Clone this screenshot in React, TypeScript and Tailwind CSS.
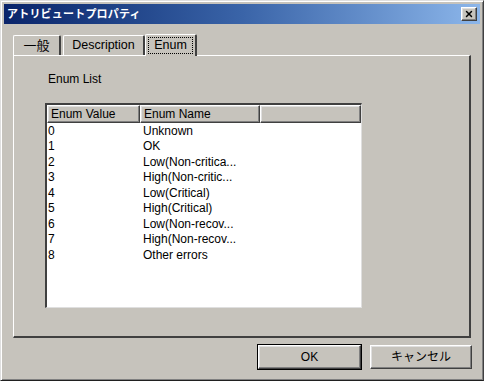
import { X } from "lucide-react"

const rows = [
  ["0", "Unknown"],
  ["1", "OK"],
  ["2", "Low(Non-critica..."],
  ["3", "High(Non-critic..."],
  ["4", "Low(Critical)"],
  ["5", "High(Critical)"],
  ["6", "Low(Non-recov..."],
  ["7", "High(Non-recov..."],
  ["8", "Other errors"],
]

const font = "font-['Liberation_Sans','Noto_Sans_CJK_JP',sans-serif]"

const raised =
  "border border-t-white border-l-white border-r-[#404040] border-b-[#404040] shadow-[inset_-1px_-1px_0_#808080,inset_1px_1px_0_#dfdfdf]"

const App = () => {
  return (
    <div
      className={`w-[484px] h-[381px] bg-[#c6c3bc] ${font} text-[12px] text-black flex flex-col p-[3px] border border-t-[#dfdfdf] border-l-[#dfdfdf] border-r-[#404040] border-b-[#202020] shadow-[inset_1px_1px_0_#fff,inset_-1px_-1px_0_#808080]`}
    >
      {/* title bar */}
      <div className="h-[20px] flex items-center justify-between pl-[3px] pr-[3px] bg-gradient-to-r from-[#0a246a] via-[#3a64a8] to-[#8cb6ea]">
        <span className="text-white font-bold text-[11px] tracking-[0.2px]">アトリビュートプロパティ</span>
        <div className={`w-[16px] h-[14px] bg-[#c6c3bc] flex items-center justify-center ${raised}`}>
          <X className="w-[10px] h-[10px] text-black" strokeWidth={3.5} />
        </div>
      </div>

      {/* tabs */}
      <div className="flex items-end ml-[9px] mt-[9px] h-[22px] relative z-10">
        <div className="w-[48px] h-[20px] flex items-center justify-center border-t border-l border-white border-r-2 border-r-[#404040] rounded-t-[2px] text-[13px]">
          一般
        </div>
        <div className="w-[82px] h-[20px] flex items-center justify-center border-t border-l border-white border-r-2 border-r-[#404040] rounded-t-[2px] ml-[2px] text-[12.5px]">
          Description
        </div>
        <div className="w-[52px] h-[22px] -mb-[1px] flex items-center justify-center bg-[#c6c3bc] border-t border-l border-white border-r-2 border-r-[#404040] rounded-t-[2px]">
          <span className="w-[45px] text-center border border-dotted border-black leading-[15px] text-[12.5px]">Enum</span>
        </div>
      </div>

      {/* panel */}
      <div className="ml-[9px] mr-[9px] h-[283px] border-t border-l border-white border-r-2 border-b-2 border-r-[#404040] border-b-[#404040] flex flex-col">
        <div className="pl-[34px] pt-[14px] h-[47px]">Enum List</div>
        <div className="ml-[31px] w-[317px] h-[205px] bg-white border-t-2 border-l-2 border-t-[#404040] border-l-[#404040] border-r border-b border-r-[#dfdfdf] border-b-[#dfdfdf] flex flex-col">
          <div className="flex h-[18px] bg-[#c6c3bc]">
            <div className={`w-[93px] pl-[3px] flex items-center ${raised}`}>Enum Value</div>
            <div className={`w-[120px] pl-[3px] flex items-center ${raised}`}>Enum Name</div>
            <div className={`flex-1 ${raised}`} />
          </div>
          <div className="flex flex-col">
            {rows.map(([v, n]) => (
              <div key={v} className="flex h-[15.5px] items-center">
                <span className="w-[96px] pl-[1px]">{v}</span>
                <span>{n}</span>
              </div>
            ))}
          </div>
        </div>
      </div>

      {/* buttons */}
      <div className="flex justify-end gap-[9px] mt-[7px] mr-[8px]">
        <button className={`w-[103px] h-[24px] bg-[#c6c3bc] flex items-center justify-center outline outline-1 outline-black ${raised}`}>
          OK
        </button>
        <button className={`w-[102px] h-[24px] bg-[#c6c3bc] flex items-center justify-center ${raised}`}>
          キャンセル
        </button>
      </div>
    </div>
  )
}

export default App
